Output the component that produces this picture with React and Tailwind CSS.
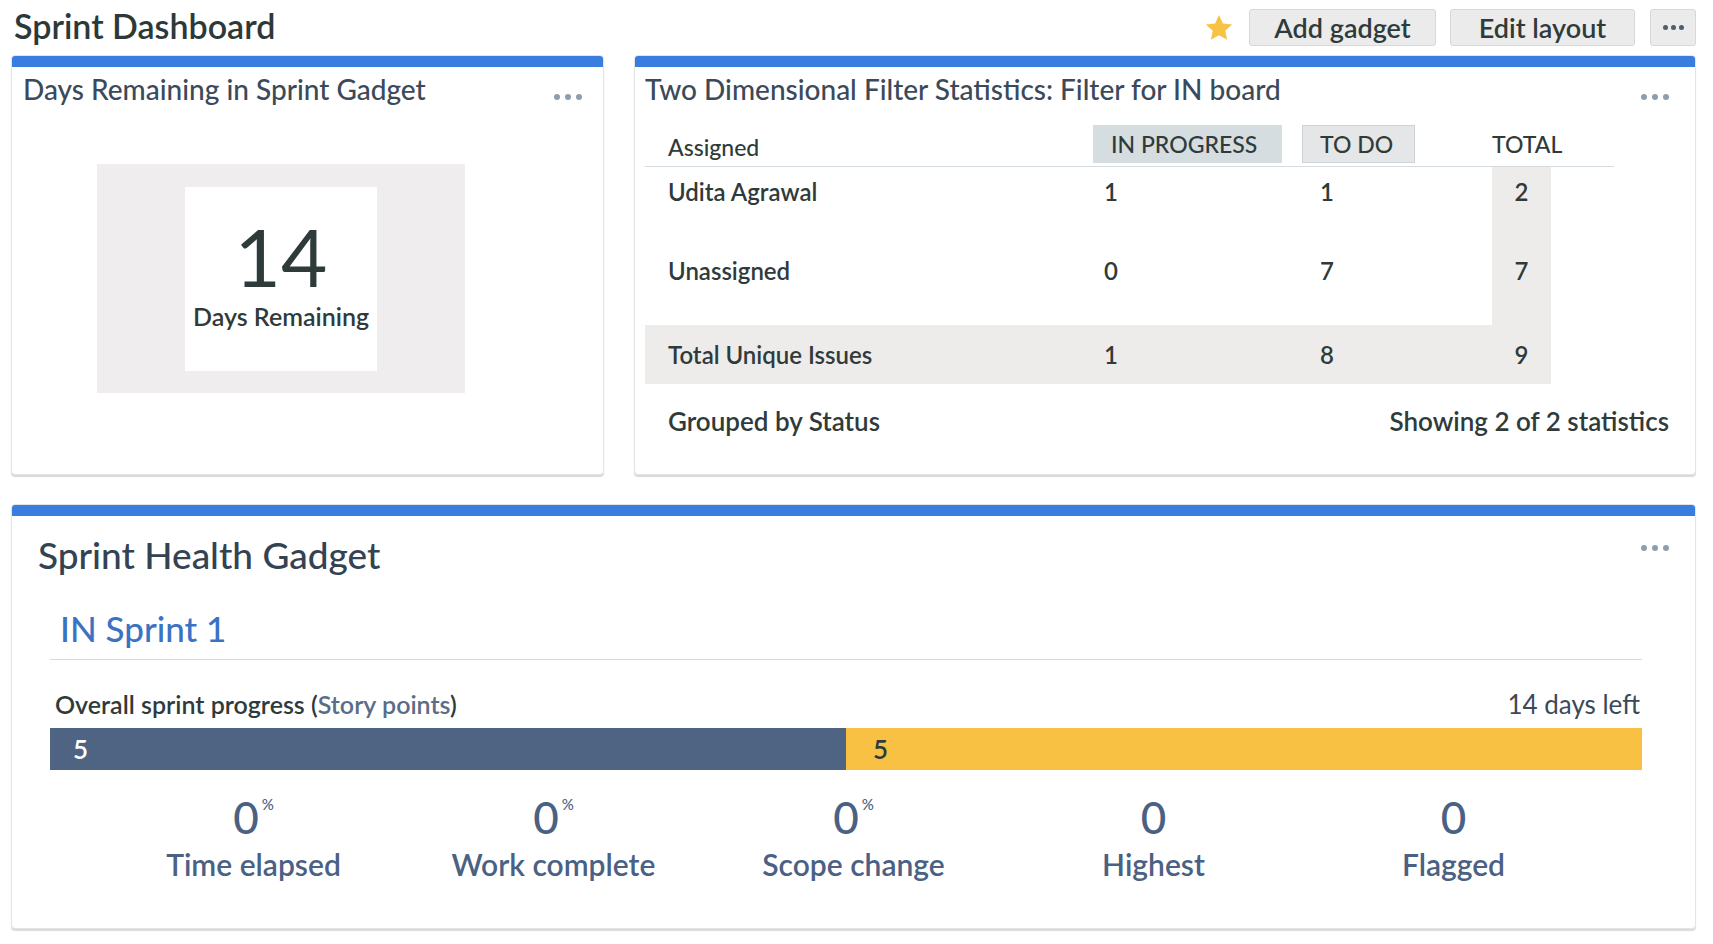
import { Fragment } from 'react';

// Dashboard Jira-like : deux gadgets en haut, un gadget "Sprint Health" en bas.

function Dots({ className = '' }) {
  return (
    <div className={`flex items-center gap-[5px] ${className}`}>
      <span className="w-[6px] h-[6px] rounded-full bg-[#8e9db0]" />
      <span className="w-[6px] h-[6px] rounded-full bg-[#8e9db0]" />
      <span className="w-[6px] h-[6px] rounded-full bg-[#8e9db0]" />
    </div>
  );
}

function Card({ className = '', children }) {
  return (
    <div
      className={`flex flex-col overflow-hidden rounded-[4px] border border-[#e2e4e6] bg-white shadow-[0_2px_1px_#d8dbde] ${className}`}
    >
      <div className="h-[11px] shrink-0 bg-[#387ddf]" />
      {children}
    </div>
  );
}

const rows = [
  { name: 'Udita Agrawal', inProgress: 1, todo: 1, total: 2 },
  { name: 'Unassigned', inProgress: 0, todo: 7, total: 7 },
];

const stats = [
  { value: '0', pct: true, label: 'Time elapsed' },
  { value: '0', pct: true, label: 'Work complete' },
  { value: '0', pct: true, label: 'Scope change' },
  { value: '0', pct: false, label: 'Highest' },
  { value: '0', pct: false, label: 'Flagged' },
];

export default function App() {
  return (
    <div className="w-[1713px] h-[944px] bg-white pl-[11px] pr-[17px] font-[Lato,sans-serif] text-[#2f3b3b]">
      {/* En-tête */}
      <header className="flex h-[55px] items-center justify-between">
        <h1 className="-mt-[4px] pl-[3px] text-[34px] leading-[40px] font-semibold text-[#2d3939]">
          Sprint Dashboard
        </h1>
        <div className="flex items-center">
          <svg viewBox="0 0 24 24" className="mr-[15px] h-[30px] w-[30px]">
            <polygon
              points="12,1.5 15.1,8.3 22.5,9.1 17,14.1 18.5,21.4 12,17.7 5.5,21.4 7,14.1 1.5,9.1 8.9,8.3"
              fill="#f8c244"
            />
          </svg>
          <button className="h-[37px] w-[187px] rounded-[3px] border border-[#d5d9da] bg-[#ebebeb] text-[27px] leading-none font-semibold text-[#2f3b3b]">
            Add gadget
          </button>
          <button className="ml-[14px] h-[37px] w-[185px] rounded-[3px] border border-[#d5d9da] bg-[#ebebeb] text-[27px] leading-none font-semibold text-[#2f3b3b]">
            Edit layout
          </button>
          <button className="ml-[15px] flex h-[37px] w-[46px] items-center justify-center gap-[3px] rounded-[3px] border border-[#d5d9da] bg-[#ebebeb]">
            <span className="h-[5px] w-[5px] rounded-full bg-[#4f5d6e]" />
            <span className="h-[5px] w-[5px] rounded-full bg-[#4f5d6e]" />
            <span className="h-[5px] w-[5px] rounded-full bg-[#4f5d6e]" />
          </button>
        </div>
      </header>

      {/* Ligne du haut */}
      <div className="grid h-[420px] grid-cols-[593px_1062px] gap-[30px]">
        <Card>
          <div className="flex items-center justify-between pl-[11px] pr-[21px] pt-[6px]">
            <h2 className="text-[28px] leading-[32px] font-medium text-[#3b4a5a]">
              Days Remaining in Sprint Gadget
            </h2>
            <Dots className="mt-[15px]" />
          </div>
          <div className="ml-[85px] mt-[59px] flex h-[229px] w-[368px] items-center justify-center bg-[#efeded]">
            <div className="flex h-[184px] w-[192px] flex-col items-center bg-white pt-[29px]">
              <div className="text-[80px] leading-[80px] font-normal text-[#2f3b3b]">14</div>
              <div className="mt-[6px] text-[25px] leading-[28px] font-semibold text-[#2f3b3b]">
                Days Remaining
              </div>
            </div>
          </div>
        </Card>

        <Card>
          <div className="flex items-center justify-between pl-[10px] pr-[26px] pt-[6px]">
            <h2 className="text-[28px] leading-[32px] font-medium text-[#3b4a5a]">
              Two Dimensional Filter Statistics: Filter for IN board
            </h2>
            <Dots className="mt-[15px]" />
          </div>

          <div className="pl-[10px]">
            {/* En-tête du tableau */}
            <div className="mt-[20px] grid w-[969px] grid-cols-[448px_209px_190px_122px] border-b border-[#d5dce1] pb-[3px] text-[23px] font-medium">
              <div className="flex h-[38px] items-center pl-[23px] pt-[6px]">Assigned</div>
              <div className="flex h-[38px] w-[189px] items-center bg-[#d6dde1] pl-[18px]">IN PROGRESS</div>
              <div className="flex h-[38px] w-[113px] items-center border border-[#cfd3d6] bg-[#e4e6e7] pl-[17px]">TO DO</div>
              <div className="flex h-[38px] items-center">TOTAL</div>
            </div>

            {/* Corps */}
            <div className="grid w-[906px] grid-cols-[448px_209px_190px_59px] text-[24px] leading-[28px] font-semibold">
              {rows.map((r) => (
                <Fragment key={r.name}>
                  <div className="h-[79px] pl-[23px] pt-[11px]">{r.name}</div>
                  <div className="h-[79px] pl-[11px] pt-[11px]">{r.inProgress}</div>
                  <div className="h-[79px] pl-[18px] pt-[11px]">{r.todo}</div>
                  <div className="h-[79px] bg-[#eeebeb] pt-[11px] text-center">{r.total}</div>
                </Fragment>
              ))}
              <div className="col-span-4 grid h-[59px] grid-cols-[448px_209px_190px_59px] items-center bg-[#eeebeb]">
                <div className="pl-[23px]">Total Unique Issues</div>
                <div className="pl-[11px]">1</div>
                <div className="pl-[18px]">8</div>
                <div className="text-center">9</div>
              </div>
            </div>

            <div className="mt-[23px] flex justify-between pl-[23px] pr-[26px] text-[26px] leading-[28px] font-semibold">
              <span>Grouped by Status</span>
              <span>Showing 2 of 2 statistics</span>
            </div>
          </div>
        </Card>
      </div>

      {/* Sprint Health Gadget */}
      <Card className="mt-[29px] h-[425px]">
        <div className="flex items-start justify-between pl-[26px] pr-[26px] pt-[19px]">
          <h2 className="text-[37px] leading-[40px] font-medium text-[#344252]">
            Sprint Health Gadget
          </h2>
          <Dots className="mt-[10px]" />
        </div>

        <div className="w-[1630px] pl-[38px]">
          <div className="mt-[33px] pl-[10px] text-[35px] leading-[40px] font-medium text-[#3b73c4]">
            IN Sprint 1
          </div>
          <div className="mt-[11px] h-px bg-[#d9d9d9]" />

          <div className="mt-[30px] flex items-center justify-between pl-[5px] pr-[2px] text-[25px] leading-[28px]">
            <span className="font-semibold text-[#2f3b3b]">
              Overall sprint progress (<span className="text-[#5b6d86]">Story points</span>)
            </span>
            <span className="text-[26px] text-[#3a4a5a]">14 days left</span>
          </div>

          <div className="mt-[10px] flex h-[42px] text-[26px] font-semibold">
            <div className="flex w-1/2 items-center bg-[#4f6482] pl-[23px] text-white">5</div>
            <div className="flex w-1/2 items-center bg-[#f8c143] pl-[27px] text-[#2f3b3b]">5</div>
          </div>
        </div>

        <div className="mt-[25px] flex justify-center text-[#4a6183]">
          {stats.map((s) => (
            <div key={s.label} className="flex w-[300px] flex-col items-center">
              <div className="flex items-start text-[44px] leading-[44px] font-medium">
                {s.value}
                {s.pct && <span className="ml-[3px] mt-[2px] text-[15px] leading-none">%</span>}
              </div>
              <div className="mt-[7px] text-[30px] leading-[36px] font-semibold">{s.label}</div>
            </div>
          ))}
        </div>
      </Card>
    </div>
  );
}
